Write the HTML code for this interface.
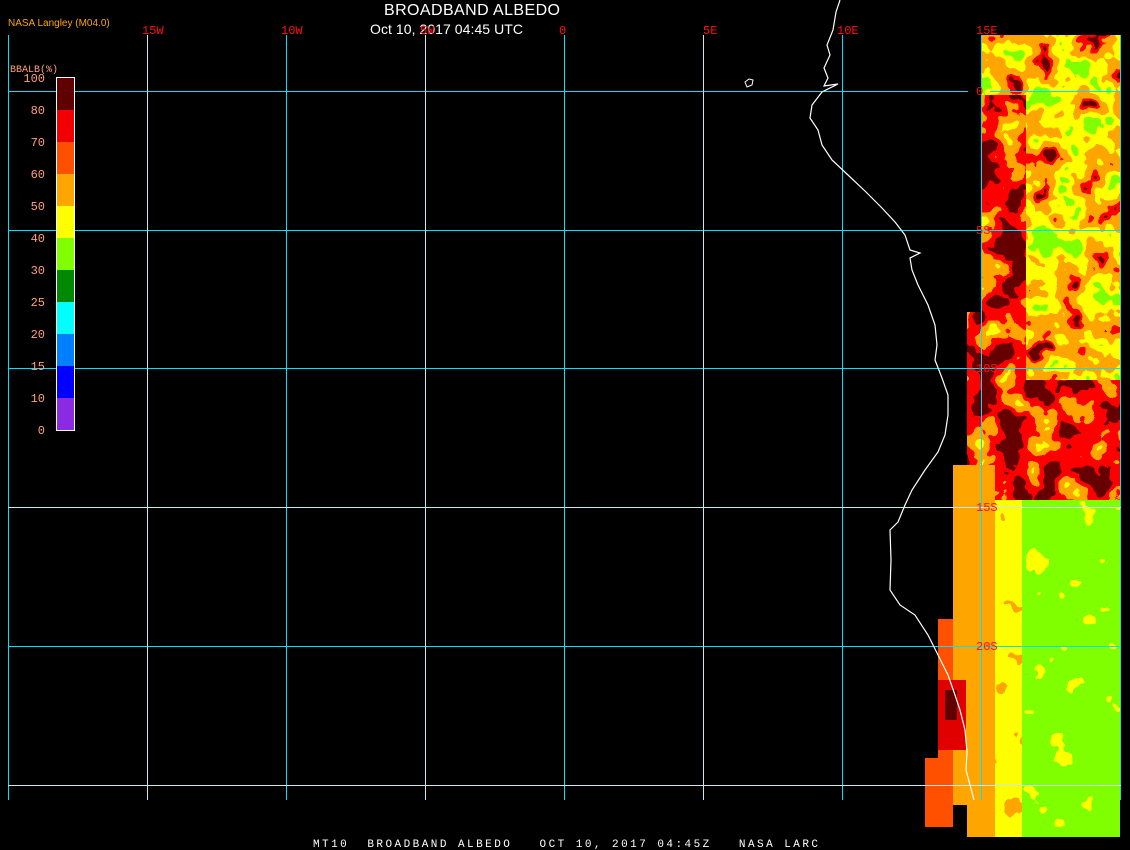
<!DOCTYPE html>
<html><head><meta charset="utf-8"><style>
html,body{margin:0;padding:0;background:#000;width:1130px;height:850px;overflow:hidden}
svg{display:block}
text{font-family:"Liberation Sans",sans-serif}
.m{font-family:"Liberation Mono",monospace}
filter{color-interpolation-filters:sRGB}
</style></head><body>
<svg width="1130" height="850" viewBox="0 0 1130 850" xmlns="http://www.w3.org/2000/svg">
<defs>
<filter id="fA" x="0" y="0" width="100%" height="100%" color-interpolation-filters="sRGB">
<feTurbulence type="fractalNoise" baseFrequency="0.035" numOctaves="3" seed="3"/>
<feColorMatrix type="matrix" values="0 0 0 0 0  0 0 0 0 0  0 0 0 0 0  1.6 0 0 0 -0.3"/>
<feColorMatrix type="matrix" values="0 0 0 1 0  0 0 0 1 0  0 0 0 1 0  0 0 0 0 1"/>
<feComponentTransfer>
<feFuncR type="discrete" tableValues="0.4 1 1 1 1 1 0.5 0.5"/>
<feFuncG type="discrete" tableValues="0 0 0.65 0.65 1 1 1 1"/>
<feFuncB type="discrete" tableValues="0 0 0 0 0 0 0 0"/>
</feComponentTransfer>
</filter>
<filter id="fB" x="0" y="0" width="100%" height="100%" color-interpolation-filters="sRGB">
<feTurbulence type="fractalNoise" baseFrequency="0.035" numOctaves="3" seed="7"/>
<feColorMatrix type="matrix" values="0 0 0 0 0  0 0 0 0 0  0 0 0 0 0  1.6 0 0 0 -0.3"/>
<feColorMatrix type="matrix" values="0 0 0 1 0  0 0 0 1 0  0 0 0 1 0  0 0 0 0 1"/>
<feComponentTransfer>
<feFuncR type="discrete" tableValues="0.4 0.4 0.4 1 1 1 1 1"/>
<feFuncG type="discrete" tableValues="0 0 0 0 0 0.65 0.65 1"/>
<feFuncB type="discrete" tableValues="0 0 0 0 0 0 0 0"/>
</feComponentTransfer>
</filter>
<filter id="fC" x="0" y="0" width="100%" height="100%" color-interpolation-filters="sRGB">
<feTurbulence type="fractalNoise" baseFrequency="0.04" numOctaves="3" seed="11"/>
<feColorMatrix type="matrix" values="0 0 0 0 0  0 0 0 0 0  0 0 0 0 0  1.6 0 0 0 -0.3"/>
<feColorMatrix type="matrix" values="0 0 0 1 0  0 0 0 1 0  0 0 0 1 0  0 0 0 0 1"/>
<feComponentTransfer>
<feFuncR type="discrete" tableValues="1 0.5 0.5 0.5 0.5 0.5"/>
<feFuncG type="discrete" tableValues="1 1 1 1 1 1"/>
<feFuncB type="discrete" tableValues="0 0 0 0 0 0"/>
</feComponentTransfer>
</filter>
<filter id="fD" x="0" y="0" width="100%" height="100%" color-interpolation-filters="sRGB">
<feTurbulence type="fractalNoise" baseFrequency="0.04" numOctaves="3" seed="5"/>
<feColorMatrix type="matrix" values="0 0 0 0 0  0 0 0 0 0  0 0 0 0 0  1.6 0 0 0 -0.3"/>
<feColorMatrix type="matrix" values="0 0 0 1 0  0 0 0 1 0  0 0 0 1 0  0 0 0 0 1"/>
<feComponentTransfer>
<feFuncR type="discrete" tableValues="1 1 1 1 1"/>
<feFuncG type="discrete" tableValues="0.65 1 1 1 1"/>
<feFuncB type="discrete" tableValues="0 0 0 0 0"/>
</feComponentTransfer>
</filter>
</defs>

<!-- data -->
<rect x="981" y="35" width="139" height="465" filter="url(#fA)"/>
<rect x="981" y="95" width="45" height="285" filter="url(#fB)"/>
<rect x="967" y="312" width="14" height="153" filter="url(#fB)"/>
<rect x="981" y="380" width="139" height="120" filter="url(#fB)"/>
<rect x="953" y="465" width="14" height="340" fill="#ffa500"/>
<rect x="967" y="465" width="28" height="372" fill="#ffa500"/>
<rect x="995" y="500" width="27" height="337" filter="url(#fD)"/>
<rect x="1022" y="500" width="98" height="337" filter="url(#fC)"/>
<rect x="938" y="619" width="15" height="208" fill="#ff5000"/>
<rect x="938" y="680" width="28" height="70" fill="#e00000"/>
<rect x="945" y="690" width="12" height="30" fill="#600000"/>
<rect x="925" y="758" width="13" height="69" fill="#ff5000"/>

<!-- grid -->
<g stroke="#00e0ff" stroke-width="1" shape-rendering="crispEdges">
<line x1="8.5" y1="35" x2="8.5" y2="800"/>
<line x1="286.5" y1="35" x2="286.5" y2="800"/>
<line x1="564.5" y1="35" x2="564.5" y2="800"/>
<line x1="842.5" y1="35" x2="842.5" y2="800"/>
<line x1="981.5" y1="35" x2="981.5" y2="800"/>
<line x1="1120.5" y1="35" x2="1120.5" y2="800"/>
<line x1="8" y1="91.5" x2="968" y2="91.5"/>
<line x1="990" y1="91.5" x2="1121" y2="91.5"/>
<line x1="8" y1="230.5" x2="1121" y2="230.5"/>
<line x1="8" y1="368.5" x2="1121" y2="368.5"/>
<line x1="8" y1="646.5" x2="1121" y2="646.5"/>
</g>
<g stroke="#c8e8f0" stroke-width="1" shape-rendering="crispEdges">
<line x1="147.5" y1="35" x2="147.5" y2="800"/>
<line x1="425.5" y1="35" x2="425.5" y2="800"/>
<line x1="703.5" y1="35" x2="703.5" y2="800"/>
<line x1="8" y1="507.5" x2="1121" y2="507.5"/>
<line x1="8" y1="785.5" x2="1121" y2="785.5"/>
</g>

<!-- coast -->
<polyline fill="none" stroke="#fff" stroke-width="1.2" points="840,0 836,12 833,30 827,45 830,55 824,68 828,78 824,86 838,84 822,92 812,105 810,118 818,130 822,145 832,160 848,175 866,192 882,208 895,222 905,235 910,250 920,253 910,258 912,270 918,285 928,305 935,325 937,345 935,360 942,378 948,395 948,415 945,435 938,452 925,470 912,490 905,505 898,522 890,530 891,560 890,590 900,605 915,615 928,635 938,655 948,675 955,695 960,710 965,730 967,752 966,770 970,785 974,800"/>
<path d="M745,82 l4,-3 4,1 -1,5 -5,2 z" fill="none" stroke="#fff" stroke-width="1"/>

<!-- colorbar -->
<g shape-rendering="crispEdges">
<rect x="57" y="78" width="17" height="32" fill="#600000"/>
<rect x="57" y="110" width="17" height="32" fill="#f00000"/>
<rect x="57" y="142" width="17" height="32" fill="#ff5000"/>
<rect x="57" y="174" width="17" height="32" fill="#ffa500"/>
<rect x="57" y="206" width="17" height="32" fill="#ffff00"/>
<rect x="57" y="238" width="17" height="32" fill="#80ff00"/>
<rect x="57" y="270" width="17" height="32" fill="#008800"/>
<rect x="57" y="302" width="17" height="32" fill="#00ffff"/>
<rect x="57" y="334" width="17" height="32" fill="#0080ff"/>
<rect x="57" y="366" width="17" height="32" fill="#0000ff"/>
<rect x="57" y="398" width="17" height="32" fill="#8a2be2"/>
<rect x="56.5" y="77.5" width="18" height="353" fill="none" stroke="#fff"/>
</g>
<g fill="#ffa07a" font-size="12" text-anchor="end">
<text x="45" y="82" class="m">100</text>
<text x="45" y="114" class="m">80</text>
<text x="45" y="146" class="m">70</text>
<text x="45" y="178" class="m">60</text>
<text x="45" y="210" class="m">50</text>
<text x="45" y="242" class="m">40</text>
<text x="45" y="274" class="m">30</text>
<text x="45" y="306" class="m">25</text>
<text x="45" y="338" class="m">20</text>
<text x="45" y="370" class="m">15</text>
<text x="45" y="402" class="m">10</text>
<text x="45" y="434" class="m">0</text>
</g>
<text x="10" y="72" fill="#ffa07a" font-size="10" class="m">BBALB(%)</text>

<!-- titles -->
<text x="8" y="26" fill="#ffa500" font-size="10">NASA Langley (M04.0)</text>
<text x="384" y="15" fill="#fff" font-size="16" textLength="176">BROADBAND ALBEDO</text>
<text x="370" y="34" fill="#fff" font-size="14" textLength="153">Oct 10, 2017 04:45 UTC</text>

<g fill="#ff1010" font-size="12">
<text x="142" y="34" class="m">15W</text>
<text x="281" y="34" class="m">10W</text>
<text x="420" y="34" class="m">5W</text>
<text x="559" y="34" class="m">0</text>
<text x="703" y="34" class="m">5E</text>
<text x="837" y="34" class="m">10E</text>
<text x="976" y="34" class="m">15E</text>
<text x="976" y="95" class="m">0</text>
<text x="976" y="234" class="m">5S</text>
<text x="976" y="372" class="m">10S</text>
<text x="976" y="511" class="m">15S</text>
<text x="976" y="650" class="m">20S</text>
</g>

<text x="313" y="847" fill="#fff" font-size="11" class="m" xml:space="preserve" style="white-space:pre" textLength="505">MT10  BROADBAND ALBEDO   OCT 10, 2017 04:45Z   NASA LARC</text>
</svg>
</body></html>
